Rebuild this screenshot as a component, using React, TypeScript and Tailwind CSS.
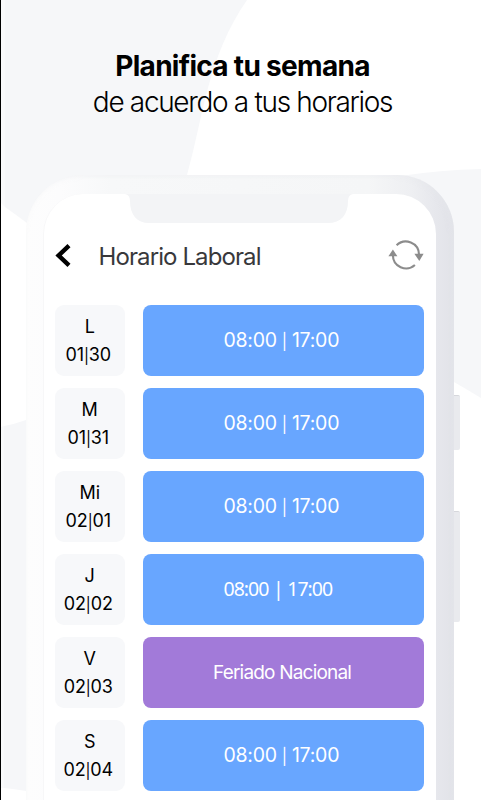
interface Day {
  label: string;
  date: [string, string];
  hours?: [string, string];
  holiday?: string;
  alt?: boolean;
}

const days: Day[] = [
  { label: "L", date: ["01", "30"], hours: ["08:00", "17:00"] },
  { label: "M", date: ["01", "31"], hours: ["08:00", "17:00"] },
  { label: "Mi", date: ["02", "01"], hours: ["08:00", "17:00"] },
  { label: "J", date: ["02", "02"], hours: ["08:00", "17:00"], alt: true },
  { label: "V", date: ["02", "03"], holiday: "Feriado Nacional" },
  { label: "S", date: ["02", "04"], hours: ["08:00", "17:00"] },
];

function Backdrop() {
  return (
    <svg className="absolute inset-0" width="481" height="800" viewBox="0 0 481 800" fill="#f6f7f9">
      <path d="M5 0H247C207 58 204 115 187 175L150 290H80L27 223Q15 214 5 207Z" />
      <path d="M400 176Q440 170 481 169V398Q468 390 454 382L400 350Z" />
      <path d="M4 426Q15 424 26 420V791Q14 789 4 788Z" />
      <path d="M1 0H5V207L1 203ZM1 427L4 426V788H1Z" fill="#f9fafb" />
      <path d="M0 0H1V800H0Z" fill="#000" />
    </svg>
  );
}

function RefreshIcon() {
  return (
    <svg width="36" height="30" viewBox="0 0 36 30" fill="none" stroke="#8c8c8c" strokeWidth="2.1">
      <path d="M8.6 5.3A13.2 13.2 0 0 1 31 14.5" />
      <path d="M26.9 25A13.2 13.2 0 0 1 4.9 15" />
      <path d="M26.4 13.8H35.6L31.3 21Z" fill="#8c8c8c" stroke="none" />
      <path d="M0.4 16.3H9.4L4.9 9.4Z" fill="#8c8c8c" stroke="none" />
    </svg>
  );
}

function Hours({ day }: { day: Day }) {
  if (!day.hours) {
    return <span className="text-[19px] tracking-[-0.8px] whitespace-nowrap">{day.holiday}</span>;
  }

  if (day.alt) {
    return (
      <span className="relative -top-px font-['Noto_Sans'] text-[19.5px] tracking-[-1px] whitespace-nowrap">
        {day.hours[0]} <span className="px-[0.5px]">|</span> {day.hours[1]}
      </span>
    );
  }

  return (
    <span className="text-[19.5px] tracking-[-0.25px] whitespace-nowrap">
      {day.hours[0]}
      <span className="relative top-[-0.5px] px-[5px] text-[16px]">|</span>
      {day.hours[1]}
    </span>
  );
}

function DayRow({ day }: { day: Day }) {
  return (
    <div className="flex h-[71px] gap-[18px]">
      <div className="flex w-[70.5px] flex-col items-center justify-center rounded-[9px] bg-[#f7f8fa] pt-px text-[18px] leading-7 text-black">
        <span>{day.label}</span>
        <span className="pr-[3px] tracking-[-0.15px]">
          {day.date[0]}
          <span className="text-[15px]">|</span>
          {day.date[1]}
        </span>
      </div>
      <div
        className={`flex w-[281px] items-center rounded-[8px] pt-px text-white ${
          day.holiday ? "bg-[#a27ad9] pl-[70px]" : "bg-[#68a6ff] pl-[80.5px]"
        }`}
      >
        <Hours day={day} />
      </div>
    </div>
  );
}

export default function App() {
  return (
    <div className="relative h-[800px] w-[481px] overflow-hidden bg-white font-['Inter',sans-serif]">
      <Backdrop />

      <div className="relative flex h-[175px] flex-col items-center pt-[48px] pl-[4px] whitespace-nowrap text-black">
        <h1 className="text-[28px] leading-9 font-bold tracking-[-0.7px]">Planifica tu semana</h1>
        <p className="text-[28px] leading-9 font-light tracking-[-1.33px]">de acuerdo a tus horarios</p>
      </div>

      <div className="relative ml-[26px] h-[700px] w-[428px] rounded-t-[57px] bg-[linear-gradient(to_right,#fdfdfd_0%,#fcfcfd_8%,#f7f8f9_20%,#f5f6f7_80%,#eeeff2_90%,#e6e7ec_96%,#e2e3e9_100%)] pt-[19px] pl-[17px] shadow-[inset_-2px_0_5px_rgba(230,231,236,0.5)]">
        {/* side keys */}
        <div className="absolute top-[220px] left-[428px] h-[55px] w-[6px] rounded-r-[2px] border-t border-[#d6d7dc] bg-[#e9eaee]" />
        <div className="absolute top-[336px] left-[428px] h-[111px] w-[6px] rounded-r-[2px] border-t border-[#d6d7dc] bg-[#e9eaee]" />

        <div className="h-[681px] w-[393px] rounded-t-[40px] border-l border-[#f7f7f8] bg-white">
          {/* notch */}
          <svg className="ml-[81px] block" width="228" height="29" viewBox="0 0 228 29" fill="#f3f4f6">
            <path d="M0 0H228Q223 1 223 7C223 21 216 29 203 29H24C12 29 5 21 5 7Q5 1 0 0Z" />
          </svg>

          <header className="flex h-[64px] items-center pr-[12px] pl-[11px]">
            <svg width="17" height="24" viewBox="0 0 17 24" fill="none" stroke="#000" strokeWidth="4.4">
              <path d="M14 2.7L3.6 12.5L14 22.3" />
            </svg>
            <h2 className="ml-[26.5px] flex-1 pt-[3px] text-[24px] tracking-[-0.9px] whitespace-nowrap text-[#38383b]">
              Horario Laboral
            </h2>
            <RefreshIcon />
          </header>

          <div className="flex flex-col gap-3 pt-[18px] pl-[10.5px]">
            {days.map((day) => (
              <DayRow key={day.label} day={day} />
            ))}
          </div>
        </div>
      </div>
    </div>
  );
}
